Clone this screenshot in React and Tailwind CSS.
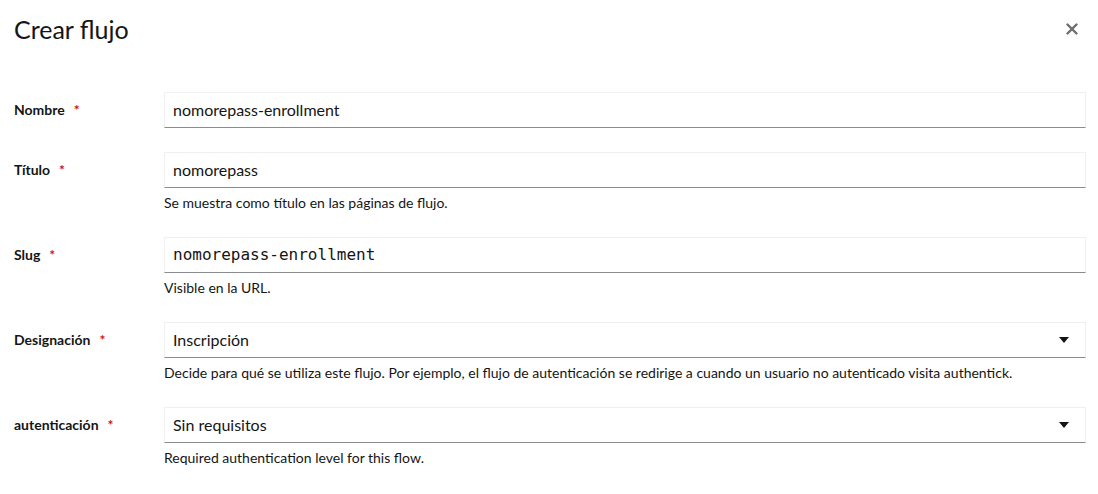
const font = { fontFamily: 'Lato, "Noto Sans", sans-serif' };

function Label({ children }) {
  return (
    <div className="w-[150px] shrink-0 h-[35px] flex items-center text-[14px] font-bold text-[#151515]">
      <span>{children}</span>
      <span className="ml-[9px] text-[#c9190b]">*</span>
    </div>
  );
}

function Caret() {
  return (
    <svg width="10" height="6" viewBox="0 0 10 6" className="shrink-0">
      <path d="M0 0h10L5 6z" fill="#151515" />
    </svg>
  );
}

function Field({ label, value, mono, select, help }) {
  return (
    <div className="flex">
      <Label>{label}</Label>
      <div className="flex-1 min-w-0">
        <div className="h-[36px] flex items-center justify-between bg-white border border-[#f0f0f0] border-b-[#8a8d90] pl-[8px] pr-[16px] pb-[1px]">
          <span
            className="text-[16px] text-[#151515]"
            style={mono ? { fontFamily: '"DejaVu Sans Mono", "Liberation Mono", monospace' } : undefined}
          >
            {value}
          </span>
          {select && <Caret />}
        </div>
        {help && <p className="mt-[4px] text-[14px] leading-[21px] text-[#151515]">{help}</p>}
      </div>
    </div>
  );
}

export default function App() {
  return (
    <div className="w-[1098px] h-[494px] bg-white overflow-hidden" style={font}>
      <div className="flex items-center justify-between pl-[14px] pr-[20px] pt-[11px] h-[46px]">
        <h1 className="text-[25px] leading-[30px] text-[#151515]">Crear flujo</h1>
        <svg width="12" height="12" viewBox="0 0 12 12" className="mt-[1px]">
          <path d="M1.5 1.5l9 9M10.5 1.5l-9 9" stroke="#6a6e73" strokeWidth="2.4" strokeLinecap="round" />
        </svg>
      </div>
      <div className="flex flex-col gap-[24px] pl-[14px] pr-[12px] pt-[46px]">
        <Field label="Nombre" value="nomorepass-enrollment" />
        <Field label="Título" value="nomorepass" help="Se muestra como título en las páginas de flujo." />
        <Field label="Slug" value="nomorepass-enrollment" mono help="Visible en la URL." />
        <Field
          label="Designación"
          value="Inscripción"
          select
          help="Decide para qué se utiliza este flujo. Por ejemplo, el flujo de autenticación se redirige a cuando un usuario no autenticado visita authentick."
        />
        <Field
          label="autenticación"
          value="Sin requisitos"
          select
          help="Required authentication level for this flow."
        />
      </div>
    </div>
  );
}
